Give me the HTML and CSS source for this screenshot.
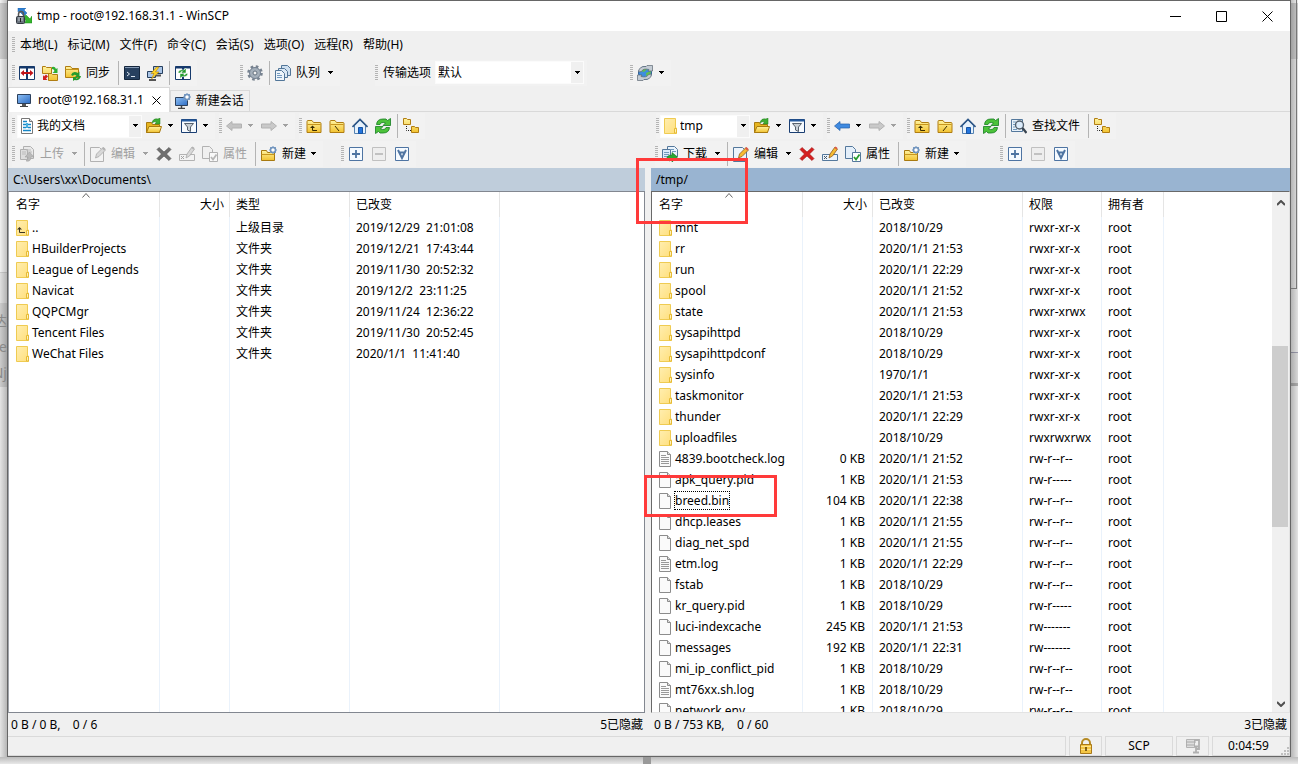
FILE: index.html
```html
<!DOCTYPE html>
<html lang="zh-CN">
<head>
<meta charset="utf-8">
<title>tmp - root@192.168.31.1 - WinSCP</title>
<link rel="stylesheet" href="styles.css">
</head>
<body>
<svg class="defs" aria-hidden="true">
  <defs>
    <linearGradient id="gold" x1="0" y1="0" x2="0" y2="1"><stop offset="0" stop-color="#fff3a0"/><stop offset="1" stop-color="#f2c230"/></linearGradient>
    <linearGradient id="screen" x1="0" y1="0" x2="1" y2="1"><stop offset="0" stop-color="#8fc0f4"/><stop offset="1" stop-color="#2c6cc4"/></linearGradient>
    <linearGradient id="pale" x1="0" y1="0" x2="1" y2="1"><stop offset="0" stop-color="#ffeeb0"/><stop offset="1" stop-color="#ffdf7c"/></linearGradient>
  </defs>
  <symbol id="folder" viewBox="0 0 16 16"><path d="M1 14.500V3.500q0-1 1-1h4l1.500 2H14q1 0 1 1v9z" fill="url(#gold)" stroke="#b07d12"/><path d="M1.500 6.500h13" stroke="#c8961e"/></symbol>
  <symbol id="listfolder" viewBox="0 0 16 16"><path d="M2.500.5h11v9.500h1v5.500h-12z" fill="url(#pale)" stroke="#efcb52"/><path d="M12.500 15v-4.500h2V15z" fill="#fff0b8" stroke="#e6bb35"/></symbol>
  <symbol id="listup" viewBox="0 0 16 16"><use href="#listfolder"/><path d="M5.500 8v4.500H11" fill="none" stroke="#3b3420"/><path d="M3 9.500h5L5.500 7z" fill="#3b3420"/></symbol>
  <symbol id="file" viewBox="0 0 16 16"><path d="M2.500.5h8l3 3v12h-11z" fill="#fafafa" stroke="#8c8c8c"/><path d="M10.500.5v3h3" fill="#ddd" stroke="#8c8c8c"/></symbol>
  <symbol id="log" viewBox="0 0 16 16"><use href="#file"/><path d="M4 4.500h5M4 6.500h8M4 8.500h8M4 10.500h8M4 12.500h8" stroke="#999"/></symbol>
  <symbol id="app" viewBox="0 0 16 16"><path d="M2 0h8L8 2l3 3-3 3-5-5-1 1z" fill="#2e7fd0" stroke="#1d62ad" stroke-width=".5"/><path d="M16 15H8l2-2-3-4 3-2 4 4 2-3z" fill="#35b52c" stroke="#16811a" stroke-width=".5"/><path d="M2.500 9V6.500a2.500 3 0 0 1 5 0V9" fill="none" stroke="#555" stroke-width="1.500"/><rect x=".5" y="8.500" width="8" height="7" rx="1" fill="#6a737d" stroke="#343a42"/><path d="M2 10h5M2 12h5" stroke="#c3ccd4"/><path d="M4.500 10v4" stroke="#222"/></symbol>
  <symbol id="compare" viewBox="0 0 16 16"><path d="M.5 1.500h15v13H.5z" fill="#fff" stroke="#163a6c"/><path d="M.5 2.500h15M8 2v12" stroke="#163a6c" stroke-width="2"/><path d="M1.500 8 5 5v2h6V5l3.500 3L11 11V9H5v2z" fill="#c2141a"/></symbol>
  <symbol id="syncbr" viewBox="0 0 16 16"><path d="M.5 1.500h3l1 1h5v6h-9zM6.500 8.500h3l1 1h5v6h-9z" fill="url(#gold)" stroke="#b07d12"/><path d="M10 2q3-1 4 2l1.500-1v5h-5l2-2q-.5-2-2.500-2z" fill="#2fae32"/><path d="M1 10v5h4.500l-1.500-1.500 2-2-2-2-2 2z" fill="#d02020"/></symbol>
  <symbol id="sync" viewBox="0 0 16 16"><path d="M.5 12.500v-11h5l1.500 2h6.500v9z" fill="url(#gold)" stroke="#b07d12"/><path d="M.5 4.500h13" stroke="#c8961e"/><path d="M6 10q2-5 7-2l1.500-1.500V12H10l1.500-1.500Q9 9 8 11zM16 11q-1 5-6.500 4L8 16v-4h4l-1 1.500q2 .5 3-2.500z" fill="#259b2c"/></symbol>
  <symbol id="terminal" viewBox="0 0 16 16"><path d="M.5 1.500h15v13H.5z" fill="#27405f" stroke="#14263d"/><path d="M1 2.500h14" stroke="#8499b4"/><path d="m3 7 2.500 2L3 11M7 11.500h4" fill="none" stroke="#dce6f0"/></symbol>
  <symbol id="putty" viewBox="0 0 16 16"><path d="M6.500 1.500h9v7h-9zM.5 6.500h8v6h-8z" fill="#a9c4e6" stroke="#27405f"/><path d="M2 15h7M9 10.500h5" stroke="#555" stroke-width="2"/><path d="M9.500 2 4 8.500h3L4.500 14 12 7H8.500L12 2z" fill="#ffd42a" stroke="#b8860b" stroke-width=".6"/></symbol>
  <symbol id="keep" viewBox="0 0 16 16"><path d="M.5 1.500h15v13H.5z" fill="#fff" stroke="#163a6c"/><path d="M.5 2.500h15M8 2v12" stroke="#163a6c" stroke-width="2"/><path d="M3 8q1-4 6-3l2-2v5H6l1.500-1.500Q5.500 6 5.500 8zM13 8.500q-1 4-6 3l-2 2v-5h5l-1.500 1.500q2 .5 2-1.500z" fill="#249c2c" stroke="#fff" stroke-width=".5"/></symbol>
  <symbol id="gear" viewBox="0 0 16 16"><circle cx="8" cy="8" r="6.500" fill="none" stroke="#788390" stroke-width="2.600" stroke-dasharray="2.600 2.500"/><circle cx="8" cy="8" r="5.500" fill="#a4afba" stroke="#738090"/><circle cx="8" cy="8" r="2" fill="#f0f0f0" stroke="#657280"/></symbol>
  <symbol id="queue" viewBox="0 0 16 16"><path d="M6.500.5h6l3 3v7h-9z" fill="#cfe0f0" stroke="#527699"/><path d="M3.500 3.500h6l3 3v6h-9z" fill="#dce9f5" stroke="#527699"/><path d="M.5 5.500h6l3 3v7h-9z" fill="#eef5fb" stroke="#527699"/><path d="M2 8.500h3M2 10.500h5M2 12.500h5" stroke="#739ac0"/></symbol>
  <symbol id="globe" viewBox="0 0 16 16"><circle cx="8" cy="8" r="6.500" fill="#3d8ede" stroke="#2a5a94"/><path d="M4 4q4-3 6 0l-3 3-3-1zM9 8l5-2-1 6-3 2z" fill="#63c04b"/><path d="M1.500 7Q2 1 9 1.500l1-1h5.500V6H11l1-1.500Q6 3 4.500 6.500zM14.500 9Q14 15 7 14.500l-1 1H.5V10H5l-1 1.500Q10 13 11.500 9.500z" fill="#c5cdd5" stroke="#5d6874" stroke-width=".7"/></symbol>
  <symbol id="monitor" viewBox="0 0 16 16"><path d="M1.500 2.500h13v9h-13z" fill="url(#screen)" stroke="#2c405c"/><path d="M6 12h4v2H6z" fill="#555"/><path d="M4 14.500h8" stroke="#444"/></symbol>
  <symbol id="newsession" viewBox="0 0 16 16"><path d="M.5 4.500h12v8H.5z" fill="url(#screen)" stroke="#2c405c"/><path d="M3 15.500h7M6.500 13v2" stroke="#444" stroke-width="1.500"/><circle cx="12" cy="4" r="2.500" fill="#fff" stroke="#6b8fba" stroke-width="1.500"/><path d="M12 0v2M12 6v2M8 4h2M14 4h2M9 1l1 1M15 1l-1 1M9 7l1-1M15 7l-1-1" stroke="#7b9cc4"/></symbol>
  <symbol id="docs" viewBox="0 0 16 16"><path d="M2.500.5h8l3 3v12h-11z" fill="#fff" stroke="#777"/><path d="M10.500.5v3h3" fill="#ddd" stroke="#777"/><path d="M4 3.500h4M4 6.500h3M9 6.500h3M4 9.500h3M9 9.500h3M4 12.500h8" stroke="#1687c7" stroke-width="1.300"/><path d="M7 5h2v5H7z" fill="#47b0df"/></symbol>
  <symbol id="open" viewBox="0 0 16 16"><path d="M.5 14.500v-10h5l1 2h7v8z" fill="#e7b51f" stroke="#a87a10"/><path d="m.5 14.500 2.500-6h12.500l-2 6z" fill="url(#gold)" stroke="#a87a10"/><path d="M6 5q1-5 6-4l2-1v6H9l1.500-2Q8.500 3 6 5z" fill="#3fae35" stroke="#1d7c1b" stroke-width=".5"/></symbol>
  <symbol id="filter" viewBox="0 0 16 16"><path d="M.5 1.500h15v13H.5z" fill="#f7fbff" stroke="#1a3e72"/><path d="M.5 2.500h15" stroke="#245b9f" stroke-width="2"/><path d="M3.500 5.500h9L9.500 9v4.500l-3-1.500V9z" fill="#c7cfd6" stroke="#56616d"/></symbol>
  <symbol id="left" viewBox="0 0 16 16"><path d="M.5 8 6 3.500V6h9.500v4H6v2.500z" fill="currentColor" stroke="#245eaa" stroke-width=".7"/></symbol>
  <symbol id="leftoff" viewBox="0 0 16 16"><path d="M.5 8 6 3.500V6h9.500v4H6v2.500z" fill="#c3c3c3" stroke="#b2b2b2"/></symbol>
  <symbol id="rightoff" viewBox="0 0 16 16"><path d="M15.500 8 10 3.500V6H.5v4H10v2.500z" fill="#c9c9c9" stroke="#b2b2b2"/></symbol>
  <symbol id="parent" viewBox="0 0 16 16"><use href="#folder"/><path d="M6.500 8v4.500H11" fill="none" stroke="#3a2c00"/><path d="M4 10h5L6.500 7.500z" fill="#3a2c00"/></symbol>
  <symbol id="rootwin" viewBox="0 0 16 16"><use href="#folder"/><path d="m6 8 4 5" stroke="#3a2c00"/></symbol>
  <symbol id="rootunix" viewBox="0 0 16 16"><use href="#folder"/><path d="m10 8-4 5" stroke="#3a2c00"/></symbol>
  <symbol id="home" viewBox="0 0 16 16"><path d="M2.500 7.500 8 2l5.500 5.500v8h-11z" fill="#e6f1fb" stroke="#5582b2"/><path d="M.5 9 8 1.500 15.500 9" fill="none" stroke="#2d5687" stroke-width="1.600"/><path d="M6.500 9.500h4v6h-4z" fill="#2374dd" stroke="#1653a2"/></symbol>
  <symbol id="refresh" viewBox="0 0 16 16"><path d="M1.500 6.500Q2 1 8 1h3l1.500 1.500L15.500.5v7H8l2.500-2.500Q6 3.500 5 6.500zM14.500 9.500Q14 15 8 15H5l-1.500-1.500-3 2v-7H8L5.500 11q4.500 1.500 5.500-1.500z" fill="#4cc23a" stroke="#157c22" stroke-width=".8"/></symbol>
  <symbol id="tree" viewBox="0 0 16 16"><path d="M.5 6.500v-6h3l1 1h3v5zM8.500 14.500v-6h3l1 1h3v5z" fill="url(#gold)" stroke="#b07d12"/><path d="M3.500 8v4.500H8" fill="none" stroke="#222" stroke-dasharray="1 1"/></symbol>
  <symbol id="upload" viewBox="0 0 16 16"><path d="M4.500.5h7l3 3v9h-10z" fill="#e9e9e9" stroke="#b0b0b0"/><path d="M1.500 3.500h7v10h-7z" fill="#ddd" stroke="#b0b0b0"/><path d="M3 6h4M3 8h4M7 4h5M9 6h4" stroke="#bbb"/><path d="M7 15q5 1 5-4h3l-4.500-5L6 11h3q0 3-2 4z" fill="#b9b9b9" stroke="#a1a1a1" stroke-width=".6"/></symbol>
  <symbol id="download" viewBox="0 0 16 16"><path d="M5.500.5h7l3 3v7h-10z" fill="#e9f3fc" stroke="#54789c"/><path d="M.5 3.500h8v10h-8z" fill="#dceafa" stroke="#54789c"/><path d="M2 6.500h5M2 8.500h5M2 10.500h4M8 3.500h4M10 5.500h4" stroke="#719abd"/><path d="M5 14q-1-5 5-5V6.500L15.500 11 10 16v-3q-2 0-2 2z" fill="#2aa632" stroke="#147020" stroke-width=".6"/></symbol>
  <symbol id="edit" viewBox="0 0 16 16"><path d="M.5 1.500h9l4 4v10H.5z" fill="#edf4fb" stroke="#54789c"/><path d="m5.500 12 1-4L13 1.500l2.500 2.500L9 10.500z" fill="#f6bb31" stroke="#8e5b21" stroke-width=".8"/><path d="m12 2.500 1.500-1.500 2 2L14 4.500z" fill="#df5548"/></symbol>
  <symbol id="delete" viewBox="0 0 16 16"><path d="m1 3.500 2-2 5 4.500 5-4.500 2 2L10.500 8l4.500 4.500-2 2L8 10l-5 4.500-2-2L5.500 8z" fill="#d42020" stroke="#a11111" stroke-width=".6"/></symbol>
  <symbol id="rename" viewBox="0 0 16 16"><path d="M.5 8.500h15v6H.5z" fill="#edf4fb" stroke="#54789c"/><path d="m2 10 3 3M5 10l-3 3" stroke="#456"/><path d="m7 12 1-4 5-7 2.500 2-5 7z" fill="#f6bb31" stroke="#8e5b21" stroke-width=".8"/><path d="m12.500 2 1-1.500 2 1.500-1 1.500z" fill="#df5548"/></symbol>
  <symbol id="props" viewBox="0 0 16 16"><path d="M.5.5h7l3 3v9H.5z" fill="#e4effa" stroke="#54789c"/><path d="M7.500 6.500h8v9h-8z" fill="#fff" stroke="#54789c"/><path d="m9 11 2 2.500 3.500-5" fill="none" stroke="#279c2e" stroke-width="1.800"/></symbol>
  <symbol id="newfolder" viewBox="0 0 16 16"><path d="M.5 14.500v-10h5l1 2h7v8z" fill="url(#gold)" stroke="#a87a10"/><path d="M.5 8.500h13" stroke="#c8961e"/><circle cx="12" cy="4" r="2.500" fill="#fff" stroke="#6b8fba" stroke-width="1.500"/><path d="M12 0v2M12 6v2M8 4h2M14 4h2M9 1l1 1M15 1l-1 1M9 7l1-1M15 7l-1-1" stroke="#7b9cc4"/></symbol>
  <symbol id="plus" viewBox="0 0 16 16"><path d="M1.500 1.500h13v13h-13z" fill="#f5faff" stroke="#4e74a2"/><path d="M4 8h8M8 4v8" stroke="#4e74a2" stroke-width="1.800"/></symbol>
  <symbol id="minus" viewBox="0 0 16 16"><path d="M1.500 1.500h13v13h-13z" fill="#eee" stroke="#c0c0c0"/><path d="M4 8h8" stroke="#bbb" stroke-width="1.800"/></symbol>
  <symbol id="invert" viewBox="0 0 16 16"><path d="M1.500 1.500h13v13h-13z" fill="#f5faff" stroke="#4e74a2"/><path d="M4 4l4 8 4-8M5.500 6.500h5" fill="none" stroke="#4e74a2" stroke-width="2"/></symbol>
  <symbol id="find" viewBox="0 0 16 16"><path d="M.5 1.500h11v12H.5z" fill="#e9f2fa" stroke="#54789c"/><path d="M2 4h3M2 6.500h2M2 9h2M2 11.500h4" stroke="#719abd"/><circle cx="8.500" cy="7" r="4" fill="#dcecfb" stroke="#53606d" stroke-width="1.400"/><path d="m11.500 10 4 5" stroke="#394450" stroke-width="2.200"/></symbol>
  <symbol id="caret" viewBox="0 0 7 4"><path d="M1 0h5v1H5v1H4v1H3V2H2V1H1z" fill="currentColor"/></symbol>
  <symbol id="lock" viewBox="0 0 16 16"><path d="M4 7V5a4 4 0 0 1 8 0v2" fill="none" stroke="#b58a24" stroke-width="2"/><path d="M2.500 6.500h11v9h-11z" fill="#f4c645" stroke="#a9791a"/><path d="M3 8.500h10M3 11.500h10" stroke="#ffe38b"/><path d="M8 9v4" stroke="#5a3c00" stroke-width="1.500"/></symbol>
  <symbol id="compress" viewBox="0 0 16 16"><path d="M1.500 1.500h8v8h-8z" fill="#ddd" stroke="#b3b3b3"/><path d="M1 4h10M1 7h9" stroke="#aaa"/><path d="M9 2h5v9h-3M8 14.500h6M11 8v6M9 8.500h5" fill="none" stroke="#b0b0b0" stroke-width="1.800"/></symbol>
</svg>

<div class="desktop">
<div class="behind-left" aria-hidden="true"><span>达</span><span>e</span><span>Nj</span></div>
<main class="window">
  <header class="titlebar">
    <svg class="icon"><use href="#app"/></svg>
    <h1>tmp - root@192.168.31.1 - WinSCP</h1>
    <div class="wincontrols">
      <button aria-label="最小化"><svg viewBox="0 0 11 11"><path d="M0 5.500h11"/></svg></button>
      <button aria-label="最大化"><svg viewBox="0 0 11 11"><path d="M.5.5h10v10H.5z"/></svg></button>
      <button aria-label="关闭"><svg viewBox="0 0 11 11"><path d="m.5.5 10 10M10.500.5l-10 10"/></svg></button>
    </div>
  </header>
  <nav class="menubar"><i class="grip"></i>
    <button>本地(L)</button><button>标记(M)</button><button>文件(F)</button><button>命令(C)</button><button>会话(S)</button><button>选项(O)</button><button>远程(R)</button><button>帮助(H)</button>
  </nav>
  <div class="toolbar main-tools">
    <div class="group"><i class="grip"></i>
      <button aria-label="比较目录"><svg class="icon"><use href="#compare"/></svg></button>
      <button aria-label="双向同步"><svg class="icon"><use href="#syncbr"/></svg></button>
      <button class="labelled"><svg class="icon"><use href="#sync"/></svg>同步</button><i class="sep"></i>
      <button aria-label="终端"><svg class="icon"><use href="#terminal"/></svg></button>
      <button aria-label="PuTTY"><svg class="icon"><use href="#putty"/></svg></button><i class="sep"></i>
      <button aria-label="同步浏览"><svg class="icon"><use href="#keep"/></svg></button>
    </div>
    <div class="group far"><i class="grip"></i>
      <button aria-label="设置"><svg class="icon"><use href="#gear"/></svg></button><i class="sep"></i>
      <button class="split"><svg class="icon"><use href="#queue"/></svg><span>队列</span><svg class="caret"><use href="#caret"/></svg></button>
    </div>
    <div class="group mid"><i class="grip"></i>
      <label class="preset" for="preset">传输选项</label>
      <div class="combo wide"><select id="preset"><option>默认</option></select><span class="drop"><svg class="caret"><use href="#caret"/></svg></span></div>
    </div>
    <div class="group far"><i class="grip"></i>
      <button class="split" aria-label="更新"><svg class="icon"><use href="#globe"/></svg><svg class="caret"><use href="#caret"/></svg></button>
    </div>
  </div>
  <div class="tabs">
    <div class="tab active"><svg class="icon"><use href="#monitor"/></svg><span>root@192.168.31.1</span><button aria-label="关闭标签"><svg viewBox="0 0 9 9"><path d="m.5.5 8 8M8.500.5l-8 8"/></svg></button></div>
    <button class="tab"><svg class="icon"><use href="#newsession"/></svg><span>新建会话</span></button>
  </div>
  <div class="panes">
    <section class="pane local">
      <div class="toolbar nav-tools">
        <div class="group"><i class="grip"></i>
          <div class="combo local-drive"><svg class="icon"><use href="#docs"/></svg><select aria-label="本地目录"><option>我的文档</option></select><span class="drop"><svg class="caret"><use href="#caret"/></svg></span></div>
          <button class="split" aria-label="打开目录"><svg class="icon"><use href="#open"/></svg><svg class="caret"><use href="#caret"/></svg></button>
          <button class="split" aria-label="过滤"><svg class="icon"><use href="#filter"/></svg><svg class="caret"><use href="#caret"/></svg></button>
        </div>
        <div class="group near"><i class="grip"></i>
          <button class="split" disabled aria-label="后退"><svg class="icon"><use href="#leftoff"/></svg><svg class="caret"><use href="#caret"/></svg></button>
          <button class="split" disabled aria-label="前进"><svg class="icon"><use href="#rightoff"/></svg><svg class="caret"><use href="#caret"/></svg></button>
        </div>
        <div class="group near"><i class="grip"></i>
          <button aria-label="父目录"><svg class="icon"><use href="#parent"/></svg></button>
          <button aria-label="根目录"><svg class="icon"><use href="#rootwin"/></svg></button>
          <button aria-label="主目录"><svg class="icon"><use href="#home"/></svg></button>
          <button aria-label="刷新"><svg class="icon"><use href="#refresh"/></svg></button><i class="sep"></i>
          <button aria-label="目录树"><svg class="icon"><use href="#tree"/></svg></button>
        </div>
      </div>
      <div class="toolbar file-tools">
        <div class="group"><i class="grip"></i>
          <button class="split" disabled><svg class="icon"><use href="#upload"/></svg><span>上传</span><svg class="caret"><use href="#caret"/></svg></button><i class="sep"></i>
          <button class="split" disabled><svg class="icon gray"><use href="#edit"/></svg><span>编辑</span><svg class="caret"><use href="#caret"/></svg></button>
          <button disabled aria-label="删除"><svg class="icon darkgray"><use href="#delete"/></svg></button>
          <button disabled aria-label="重命名"><svg class="icon gray"><use href="#rename"/></svg></button>
          <button class="labelled" disabled><svg class="icon gray"><use href="#props"/></svg>属性</button><i class="sep"></i>
          <button class="split menu"><svg class="icon"><use href="#newfolder"/></svg><span>新建</span><svg class="caret"><use href="#caret"/></svg></button>
        </div>
        <div class="group select-local"><i class="grip"></i>
          <button aria-label="选择"><svg class="icon"><use href="#plus"/></svg></button>
          <button disabled aria-label="取消选择"><svg class="icon"><use href="#minus"/></svg></button>
          <button aria-label="反向选择"><svg class="icon"><use href="#invert"/></svg></button>
        </div>
      </div>
      <div class="path">C:\Users\xx\Documents\</div>
      <div class="list">
        <table>
          <colgroup><col class="w-name"><col class="w-size"><col class="w-type"><col class="w-date"><col></colgroup>
          <thead><tr><th class="sorted">名字<svg class="sort" viewBox="0 0 8 5"><path d="m.5 4.500 3.500-4 3.500 4"/></svg></th><th class="num">大小</th><th>类型</th><th>已改变</th><th></th></tr></thead>
          <tbody>
            <tr><td><svg class="icon"><use href="#listup"/></svg>..</td><td></td><td>上级目录</td><td>2019/12/29&nbsp; 21:01:08</td><td></td></tr>
            <tr><td><svg class="icon"><use href="#listfolder"/></svg>HBuilderProjects</td><td></td><td>文件夹</td><td>2019/12/21&nbsp; 17:43:44</td><td></td></tr>
            <tr><td><svg class="icon"><use href="#listfolder"/></svg>League of Legends</td><td></td><td>文件夹</td><td>2019/11/30&nbsp; 20:52:32</td><td></td></tr>
            <tr><td><svg class="icon"><use href="#listfolder"/></svg>Navicat</td><td></td><td>文件夹</td><td>2019/12/2&nbsp; 23:11:25</td><td></td></tr>
            <tr><td><svg class="icon"><use href="#listfolder"/></svg>QQPCMgr</td><td></td><td>文件夹</td><td>2019/11/24&nbsp; 12:36:22</td><td></td></tr>
            <tr><td><svg class="icon"><use href="#listfolder"/></svg>Tencent Files</td><td></td><td>文件夹</td><td>2019/11/30&nbsp; 20:52:45</td><td></td></tr>
            <tr><td><svg class="icon"><use href="#listfolder"/></svg>WeChat Files</td><td></td><td>文件夹</td><td>2020/1/1&nbsp; 11:41:40</td><td></td></tr>
            <tr class="filler"><td></td><td></td><td></td><td></td><td></td></tr>
          </tbody>
        </table>
      </div>
      <div class="summary"><span>0 B / 0 B,&nbsp;&nbsp;&nbsp; 0 / 6</span><span>5已隐藏</span></div>
    </section>
    <section class="pane remote">
      <div class="toolbar nav-tools">
        <div class="group"><i class="grip"></i>
          <div class="combo remote-dir"><svg class="icon"><use href="#listfolder"/></svg><select aria-label="远程目录"><option>tmp</option></select><span class="drop"><svg class="caret"><use href="#caret"/></svg></span></div>
          <button class="split" aria-label="打开目录"><svg class="icon"><use href="#open"/></svg><svg class="caret"><use href="#caret"/></svg></button>
          <button class="split" aria-label="过滤"><svg class="icon"><use href="#filter"/></svg><svg class="caret"><use href="#caret"/></svg></button>
        </div>
        <div class="group near"><i class="grip"></i>
          <button class="split" aria-label="后退"><svg class="icon blue"><use href="#left"/></svg><svg class="caret"><use href="#caret"/></svg></button>
          <button class="split" disabled aria-label="前进"><svg class="icon"><use href="#rightoff"/></svg><svg class="caret"><use href="#caret"/></svg></button>
        </div>
        <div class="group near"><i class="grip"></i>
          <button aria-label="父目录"><svg class="icon"><use href="#parent"/></svg></button>
          <button aria-label="根目录"><svg class="icon"><use href="#rootunix"/></svg></button>
          <button aria-label="主目录"><svg class="icon"><use href="#home"/></svg></button>
          <button aria-label="刷新"><svg class="icon"><use href="#refresh"/></svg></button><i class="sep"></i>
          <button class="labelled"><svg class="icon"><use href="#find"/></svg>查找文件</button><i class="sep"></i>
          <button aria-label="目录树"><svg class="icon"><use href="#tree"/></svg></button>
        </div>
      </div>
      <div class="toolbar file-tools">
        <div class="group"><i class="grip"></i>
          <button class="split"><svg class="icon"><use href="#download"/></svg><span>下载</span><svg class="caret"><use href="#caret"/></svg></button><i class="sep"></i>
          <button class="split"><svg class="icon"><use href="#edit"/></svg><span>编辑</span><svg class="caret"><use href="#caret"/></svg></button>
          <button aria-label="删除"><svg class="icon"><use href="#delete"/></svg></button>
          <button aria-label="重命名"><svg class="icon"><use href="#rename"/></svg></button>
          <button class="labelled"><svg class="icon"><use href="#props"/></svg>属性</button><i class="sep"></i>
          <button class="split menu"><svg class="icon"><use href="#newfolder"/></svg><span>新建</span><svg class="caret"><use href="#caret"/></svg></button>
        </div>
        <div class="group select-remote"><i class="grip"></i>
          <button aria-label="选择"><svg class="icon"><use href="#plus"/></svg></button>
          <button disabled aria-label="取消选择"><svg class="icon"><use href="#minus"/></svg></button>
          <button aria-label="反向选择"><svg class="icon"><use href="#invert"/></svg></button>
        </div>
      </div>
      <div class="path">/tmp/</div>
      <div class="list">
        <table>
          <colgroup><col class="w-name"><col class="w-size"><col class="w-date"><col class="w-rights"><col class="w-owner"><col></colgroup>
          <thead><tr><th class="sorted">名字<svg class="sort" viewBox="0 0 8 5"><path d="m.5 4.500 3.500-4 3.500 4"/></svg></th><th class="num">大小</th><th>已改变</th><th>权限</th><th>拥有者</th><th></th></tr></thead>
          <tbody>
            <tr><td><svg class="icon"><use href="#listfolder"/></svg>mnt</td><td></td><td>2018/10/29</td><td>rwxr-xr-x</td><td>root</td><td></td></tr>
            <tr><td><svg class="icon"><use href="#listfolder"/></svg>rr</td><td></td><td>2020/1/1 21:53</td><td>rwxr-xr-x</td><td>root</td><td></td></tr>
            <tr><td><svg class="icon"><use href="#listfolder"/></svg>run</td><td></td><td>2020/1/1 22:29</td><td>rwxr-xr-x</td><td>root</td><td></td></tr>
            <tr><td><svg class="icon"><use href="#listfolder"/></svg>spool</td><td></td><td>2020/1/1 21:52</td><td>rwxr-xr-x</td><td>root</td><td></td></tr>
            <tr><td><svg class="icon"><use href="#listfolder"/></svg>state</td><td></td><td>2020/1/1 21:53</td><td>rwxr-xrwx</td><td>root</td><td></td></tr>
            <tr><td><svg class="icon"><use href="#listfolder"/></svg>sysapihttpd</td><td></td><td>2018/10/29</td><td>rwxr-xr-x</td><td>root</td><td></td></tr>
            <tr><td><svg class="icon"><use href="#listfolder"/></svg>sysapihttpdconf</td><td></td><td>2018/10/29</td><td>rwxr-xr-x</td><td>root</td><td></td></tr>
            <tr><td><svg class="icon"><use href="#listfolder"/></svg>sysinfo</td><td></td><td>1970/1/1</td><td>rwxr-xr-x</td><td>root</td><td></td></tr>
            <tr><td><svg class="icon"><use href="#listfolder"/></svg>taskmonitor</td><td></td><td>2020/1/1 21:53</td><td>rwxr-xr-x</td><td>root</td><td></td></tr>
            <tr><td><svg class="icon"><use href="#listfolder"/></svg>thunder</td><td></td><td>2020/1/1 22:29</td><td>rwxr-xr-x</td><td>root</td><td></td></tr>
            <tr><td><svg class="icon"><use href="#listfolder"/></svg>uploadfiles</td><td></td><td>2018/10/29</td><td>rwxrwxrwx</td><td>root</td><td></td></tr>
            <tr><td><svg class="icon"><use href="#log"/></svg>4839.bootcheck.log</td><td class="num">0 KB</td><td>2020/1/1 21:52</td><td>rw-r--r--</td><td>root</td><td></td></tr>
            <tr><td><svg class="icon"><use href="#file"/></svg>apk_query.pid</td><td class="num">1 KB</td><td>2020/1/1 21:53</td><td>rw-r-----</td><td>root</td><td></td></tr>
            <tr><td><svg class="icon"><use href="#file"/></svg><span class="focused">breed.bin</span></td><td class="num">104 KB</td><td>2020/1/1 22:38</td><td>rw-r--r--</td><td>root</td><td></td></tr>
            <tr><td><svg class="icon"><use href="#file"/></svg>dhcp.leases</td><td class="num">1 KB</td><td>2020/1/1 21:55</td><td>rw-r--r--</td><td>root</td><td></td></tr>
            <tr><td><svg class="icon"><use href="#file"/></svg>diag_net_spd</td><td class="num">1 KB</td><td>2020/1/1 21:55</td><td>rw-r--r--</td><td>root</td><td></td></tr>
            <tr><td><svg class="icon"><use href="#log"/></svg>etm.log</td><td class="num">1 KB</td><td>2020/1/1 22:29</td><td>rw-r--r--</td><td>root</td><td></td></tr>
            <tr><td><svg class="icon"><use href="#file"/></svg>fstab</td><td class="num">1 KB</td><td>2018/10/29</td><td>rw-r--r--</td><td>root</td><td></td></tr>
            <tr><td><svg class="icon"><use href="#file"/></svg>kr_query.pid</td><td class="num">1 KB</td><td>2018/10/29</td><td>rw-r-----</td><td>root</td><td></td></tr>
            <tr><td><svg class="icon"><use href="#file"/></svg>luci-indexcache</td><td class="num">245 KB</td><td>2020/1/1 21:53</td><td>rw-------</td><td>root</td><td></td></tr>
            <tr><td><svg class="icon"><use href="#file"/></svg>messages</td><td class="num">192 KB</td><td>2020/1/1 22:31</td><td>rw-------</td><td>root</td><td></td></tr>
            <tr><td><svg class="icon"><use href="#file"/></svg>mi_ip_conflict_pid</td><td class="num">1 KB</td><td>2018/10/29</td><td>rw-r--r--</td><td>root</td><td></td></tr>
            <tr><td><svg class="icon"><use href="#log"/></svg>mt76xx.sh.log</td><td class="num">1 KB</td><td>2018/10/29</td><td>rw-r--r--</td><td>root</td><td></td></tr>
            <tr><td><svg class="icon"><use href="#file"/></svg>network.env</td><td class="num">1 KB</td><td>2018/10/29</td><td>rw-r--r--</td><td>root</td><td></td></tr>
          </tbody>
        </table>
        <div class="scrollbar" aria-hidden="true">
          <svg viewBox="0 0 8 6"><path d="m0 5 4-4 4 4"/></svg>
          <div class="track"><div class="thumb"></div></div>
          <svg viewBox="0 0 8 6"><path d="m0 1 4 4 4-4"/></svg>
        </div>
      </div>
      <div class="summary"><span>0 B / 753 KB,&nbsp;&nbsp;&nbsp; 0 / 60</span><span>3已隐藏</span></div>
    </section>
  </div>
  <footer class="statusbar">
    <span class="cell grow"></span>
    <span class="cell small"><svg class="icon"><use href="#lock"/></svg></span>
    <span class="cell proto">SCP</span>
    <span class="cell small"><svg class="icon"><use href="#compress"/></svg></span>
    <span class="cell time">0:04:59</span>
    <svg class="sizegrip" viewBox="0 0 9 9"><path d="M6 0h2v2H6zM3 3h2v2H3zM6 3h2v2H6zM0 6h2v2H0zM3 6h2v2H3zM6 6h2v2H6z"/></svg>
  </footer>
  <div class="mark mark-path"></div>
  <div class="mark mark-file"></div>
</main>
<div class="behind-right" aria-hidden="true"><div class="other"></div></div>
<div class="behind-bottom" aria-hidden="true"></div>
</div>
</body>
</html>
```

FILE: styles.css
```css
* { box-sizing: border-box; }
body {
  margin: 0;
  font: 12px/16px "Noto Sans", "Noto Sans CJK SC", sans-serif;
  color: #000;
}
.defs { position: absolute; width: 0; height: 0; }
button, select { font: inherit; color: inherit; }
button { border: 0; background: none; padding: 0; }
svg { display: block; flex: none; }
.icon { width: 16px; height: 16px; }

.desktop {
  display: grid;
  grid-template: minmax(0, 1fr) 7px / 7px minmax(0, 1fr) 7px;
  height: 100vh;
  overflow: hidden;
  background: #dedede;
}
.behind-left {
  display: flex;
  flex-direction: column;
  gap: 10px;
  padding-top: 313px;
  overflow: hidden;
  color: #888;
  font-size: 14px;
  direction: rtl;
  background: linear-gradient(90deg, transparent, #0003), linear-gradient(#f0f0f0 3px, #cdcdcd 3px 59px, #f0f0f0 59px 272px, #ccc 272px 273px, #e0e0e0 273px 303px, #ccc 303px 387px, #e4e4e4 387px);
}
.behind-right { background: linear-gradient(90deg, #0003, transparent), linear-gradient(#f0f0f0 3px, #c8c8c8 3px 59px, #e2e2e2 59px 352px, #99a 352px 353px, #d8d8d8 353px 383px, #aaa 383px 386px, #e4e4e4 386px); }
.other { width: 6px; height: 289px; border: solid #777; border-width: 0 1px 1px 0; }
.behind-bottom { grid-column: 1 / -1; background: linear-gradient(#bbb, #e8e8e8); display: flex; justify-content: center; }
.behind-bottom::before { content: ""; width: 8px; margin-right: 4px; background: #999; }

.window {
  position: relative;
  display: flex;
  flex-direction: column;
  min-width: 0;
  background: #f0f0f0;
  border: 1px solid #666;
}
.titlebar { display: flex; align-items: center; height: 30px; flex: none; padding-left: 8px; gap: 5px; background: #fff; }
.titlebar h1 { margin: 0; font-size: 12px; font-weight: 400; flex: 1; }
.wincontrols { display: flex; }
.wincontrols button { width: 46px; height: 30px; display: grid; place-items: center; }
.wincontrols svg { width: 11px; height: 11px; fill: none; stroke: #000; }

.grip { width: 3px; height: 16px; flex: none; background: repeating-linear-gradient(#b4b4b4 0 1px, transparent 1px 2px); }
.menubar { display: flex; align-items: center; height: 27px; flex: none; padding-left: 4px; }
.menubar button { padding: 0 5px; white-space: nowrap; }

.toolbar { display: flex; align-items: center; flex: none; height: 28px; padding-left: 4px; white-space: nowrap; overflow: hidden; }
.group { display: flex; align-items: center; height: 26px; background: #f2f2f2; padding-right: 3px; }
.group.near { margin-left: 4px; }
.group.far { margin-left: 43px; }
.group.mid { margin-left: 35px; }
.select-local { margin-left: 18px; }
.select-remote { margin-left: 34px; }
.group button { display: flex; align-items: center; height: 24px; padding: 0 3px 0 4px; }
.group button.labelled { gap: 5px; padding-right: 5px; }
.group button.split { gap: 5px; }
.group .split span { padding-right: 2px; }
.group .split.menu span { padding-right: 0; margin-right: -1px; }
.group button:disabled { color: #a0a0a0; }
.sep { width: 1px; height: 24px; margin: 0 1px 0 3px; background: #b4b4b4; }
.caret { width: 7px; height: 4px; }
.gray { filter: grayscale(1) opacity(.5); }
.darkgray { filter: grayscale(1) brightness(1.6); }
.blue { color: #3f8ae0; }
.main-tools { height: 29px; }
.preset { padding: 0 4px 0 5px; }
.combo { display: flex; align-items: center; height: 23px; background: #fff; border: 1px solid #fbfbfb; }
.combo select { appearance: none; flex: 1; min-width: 0; border: 0; padding: 0 2px; background: none; height: 21px; }
.combo .icon { margin-left: 1px; }
.drop { display: grid; place-items: center; width: 12px; height: 21px; background: #f0f0f0; }
.wide { width: 149px; }
.local-drive { width: 125px; margin-left: 2px; }
.remote-dir { width: 90px; margin-left: 1px; }

.tabs { display: flex; align-items: flex-end; flex: none; height: 25px; border-bottom: 1px solid #d9d9d9; }
.tab { display: flex; align-items: center; gap: 5px; height: 21px; padding: 0 5px 0 4px; border: 1px solid #d9d9d9; border-bottom: 0; }
.tab.active { height: 25px; margin-bottom: -1px; padding: 0 8px 0 7px; background: #fff; }
.tab svg:not(.icon) { width: 9px; height: 9px; fill: none; stroke: #000; }
.tab.active > span { padding: 0 3px 0 1px; }

.panes { display: grid; grid-template-columns: 637fr 639fr; column-gap: 6px; flex: 1; min-height: 0; }
.pane { display: flex; flex-direction: column; min-width: 0; min-height: 0; }
.remote .nav-tools { padding-left: 5px; }
.path { flex: none; height: 23px; padding: 4px 5px; background: #bfcddb; }
.remote .path { background: #99b4d1; }
.list { display: flex; flex: 1; min-height: 0; overflow: hidden; background: #fff; border: 1px solid #828790; }
.remote .list { border-color: #696969 #e3e3e3 #e3e3e3 #696969; }
.local .list { border-left-color: #a0a4aa; }
table { flex: 1; width: 100%; height: 100%; table-layout: fixed; border-collapse: separate; border-spacing: 0; }
.w-name { width: 151px; }
.w-size { width: 70px; }
.w-type { width: 120px; }
.w-date { width: 150px; }
.w-rights { width: 79px; }
.w-owner { width: 62px; }
th { height: 25px; padding: 0 6px; text-align: left; font-weight: 400; border-right: 1px solid #e5e5e5; }
th.sorted { position: relative; padding-left: 7px; }
.sort { position: absolute; top: 1px; left: 73px; width: 8px; height: 5px; fill: none; stroke: #666; }
td { height: 21px; padding: 0 6px; border-right: 1px solid #eaf2fb; white-space: nowrap; }
th:last-child, td:last-child { border-right: 0; }
td:first-child { padding-left: 5px; }
td .icon { display: inline-block; vertical-align: top; margin-right: 2px; }
th.num { text-align: right; padding: 0 5px 0 0; }
td.num { text-align: right; padding: 0 7px 0 0; }
.filler td { height: auto; }
.focused { outline: 1px dotted #000; }
.scrollbar { display: flex; flex-direction: column; align-items: center; width: 17px; padding: 8px 0 5px; background: #f0f0f0; }
.scrollbar svg { width: 8px; height: 6px; fill: none; stroke: #505050; stroke-width: 2; }
.track { display: grid; grid-template-rows: 57fr 74fr 71fr; flex: 1; align-self: stretch; }
.thumb { grid-row: 2; background: #cdcdcd; margin-right: 1px; }
.summary { display: flex; justify-content: space-between; align-items: center; flex: none; height: 23px; padding: 0 3px; }
.local .summary { padding-right: 2px; }

.statusbar { position: relative; display: flex; gap: 3px; flex: none; height: 20px; }
.cell { display: grid; place-items: center; border: 1px solid #dadada; }
.cell.grow { flex: 1; border-left: 0; }
.cell.small { width: 33px; }
.cell.proto { width: 68px; }
.cell.time { width: 78px; padding-right: 5px; }
.sizegrip { position: absolute; right: 0; bottom: 0; width: 9px; height: 9px; fill: #bfbfbf; }

.mark { position: absolute; border: 3px solid #ff3a3a; pointer-events: none; }
.mark-path { left: 628px; top: 157px; width: 112px; height: 66px; }
.mark-file { left: 636px; top: 474px; width: 133px; height: 42px; }
```
